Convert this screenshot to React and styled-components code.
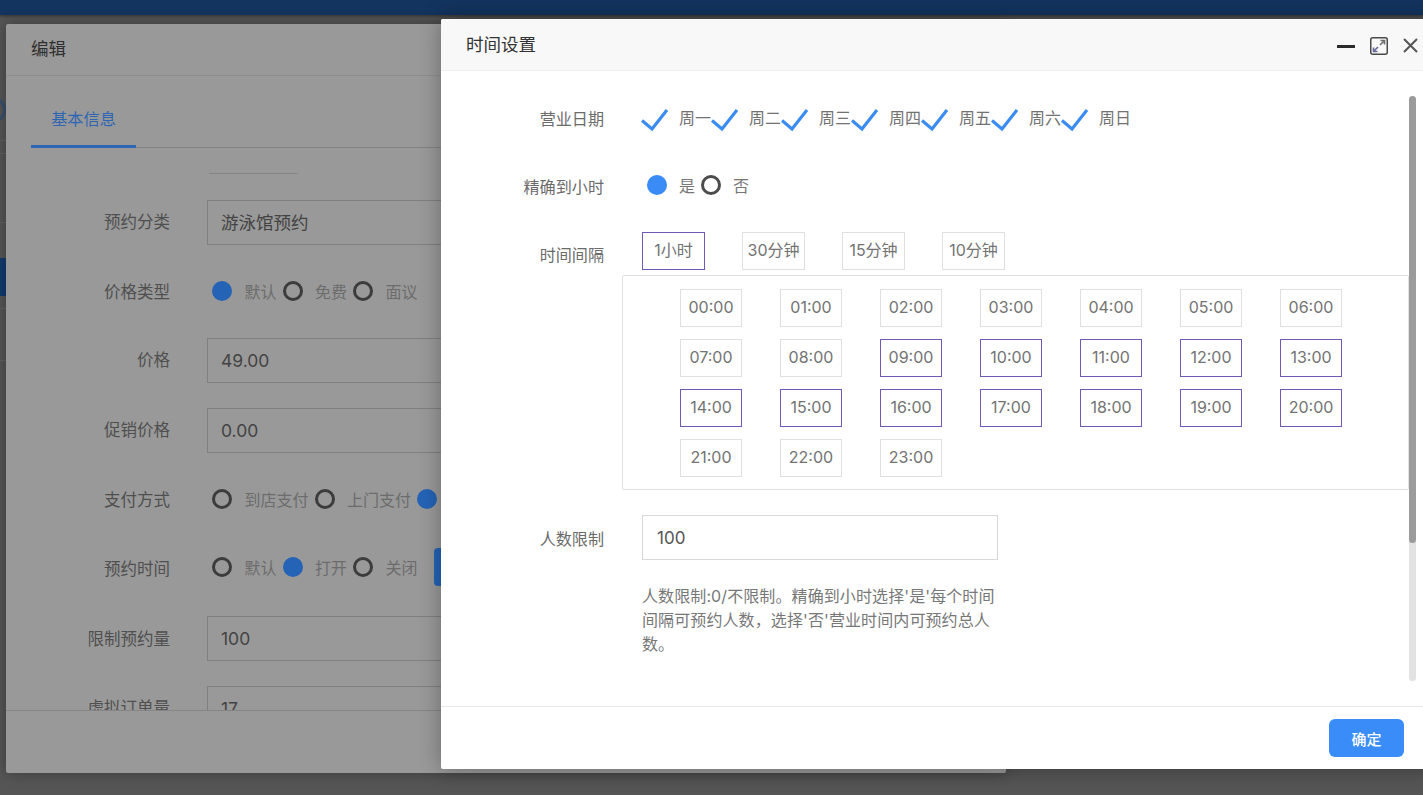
import styled, { createGlobalStyle } from 'styled-components'

const GlobalStyle = createGlobalStyle`
   html, body {
      margin: 0;
      padding: 0;
      height: 100%;
      overflow: hidden;
      background: #555;
      font-family: 'Inter', 'Noto Sans CJK SC', sans-serif;
   }
   * {
      box-sizing: border-box;
   }
`

const Page = styled.div`
   position: relative;
   width: 1423px;
   height: 795px;
   overflow: hidden;
   background: #555;
`

const TopBar = styled.div`
   height: 15px;
   background: #13345f;
   box-shadow: 0 1px 3px rgba(0, 0, 0, 0.45);
`

const SideStrip = styled.div`
   display: flex;
   flex-direction: column;
   width: 6px;
   overflow: hidden;
`

const SideRing = styled.div`
   flex: none;
   width: 26px;
   height: 26px;
   margin: 82px 0 0 -20px;
   border: 3px solid #37506e;
   border-radius: 50%;
`

const SideLine = styled.div`
   flex: none;
   height: 1px;
   margin-top: ${props => props.$gap}px;
   background: #616161;
`

const SideBlock = styled.div`
   flex: none;
   height: 38px;
   margin-top: ${props => props.$gap}px;
   background: #123a6e;
`

const Window = styled.section`
   position: absolute;
   left: ${props => props.$left}px;
   top: ${props => props.$top}px;
   display: flex;
   flex-direction: column;
   width: 1000px;
   height: ${props => props.$height}px;
   background: ${props => props.$bg};
   box-shadow: 0 0 ${props => props.$shadow}px rgba(0, 0, 0, 0.32);
   border-radius: 2px;
`

const EditHeader = styled.header`
   flex: none;
   height: 52px;
   padding-left: 25px;
   border-bottom: 1px solid #8f8f8f;
   color: #2f2f2f;
   font-size: 17.5px;
   line-height: 50px;
`

const EditBody = styled.div`
   flex: none;
   height: 635px;
   padding: 0 25px;
   overflow: hidden;
   border-bottom: 1px solid #858585;
`

const TabBar = styled.div`
   display: flex;
   height: 72px;
   border-bottom: 1px solid #828282;
`

const Tab = styled.div`
   width: 105px;
   height: 72px;
   padding-top: 28px;
   border-bottom: 3px solid #2f66b4;
   color: #2f66b4;
   font-size: 16.2px;
   line-height: 30px;
   text-align: center;
`

const ClippedField = styled.div`
   width: 89px;
   height: 26px;
   margin: 0 0 26px 178px;
   border-bottom: 1px solid #858585;
`

const EditRow = styled.div`
   display: flex;
   height: ${props => props.$height}px;
   margin-bottom: ${props => props.$gap}px;
`

const EditLabel = styled.div`
   flex: none;
   width: 139px;
   margin-right: 37px;
   color: #4f4f4f;
   font-size: 16.5px;
   line-height: ${props => props.$line || 45}px;
   text-align: right;
`

const EditInput = styled.div`
   flex: none;
   width: 700px;
   height: 45px;
   padding-left: 13px;
   border: 1px solid #808080;
   color: #434343;
   font-size: 17.5px;
   line-height: 43px;
`

const RadioGroup = styled.div`
   display: flex;
   align-items: center;
   height: 42px;
`

const RadioItem = styled.div`
   display: flex;
   align-items: center;
   flex: none;
   margin-right: 1px;
   padding-left: 5px;
   color: ${props => props.$color};
   font-size: 16px;
`

const RadioDot = styled.span`
   flex: none;
   width: 20px;
   height: 20px;
   margin-right: ${props => props.$space}px;
   border-radius: 50%;
   background: ${props => (props.$on ? props.$blue : 'transparent')};
   border: ${props => (props.$on ? 'none' : `3px solid ${props.$ring}`)};
`

const HiddenButton = styled.div`
   flex: none;
   width: 90px;
   height: 38px;
   margin-left: 15px;
   border-radius: 4px;
   background: #2463b6;
`

const TimeHeader = styled.header`
   display: flex;
   align-items: center;
   flex: none;
   height: 52px;
   padding: 0 23px 0 25px;
   border-bottom: 1px solid #eee;
   border-radius: 2px 2px 0 0;
   background: #f8f8f8;
   color: #333;
   font-size: 17.5px;
`

const TimeTitle = styled.div`
   flex: 1;
   margin-top: -2px;
`

const WindowTools = styled.div`
   display: flex;
   align-items: center;
   gap: 15px;
   margin-top: 2px;
`

const TimeBody = styled.div`
   flex: none;
   height: 636px;
   padding-top: 25px;
   border-bottom: 1px solid #e8e8e8;
   overflow: hidden;
`

const TimeRow = styled.div`
   display: flex;
   margin-bottom: ${props => props.$gap}px;
`

const TimeLabel = styled.div`
   flex: none;
   width: 163px;
   height: 46px;
   margin-right: 38px;
   color: #6b6b6b;
   font-size: 16.1px;
   line-height: ${props => props.$line || 46}px;
   text-align: right;
`

const TimeValue = styled.div`
   display: flex;
   flex-direction: column;
   flex: none;
   width: 767px;
`

const DayList = styled.div`
   display: flex;
   align-items: center;
   height: 42px;
   margin-left: -1px;
`

const DayItem = styled.div`
   display: flex;
   align-items: center;
   flex: none;
   width: 70px;
   color: #727272;
   font-size: 16px;
   white-space: nowrap;
`

const DayCheck = styled.svg`
   flex: none;
   width: 27px;
   height: 24px;
   margin: 5px 11px 0 0;
`

const IntervalList = styled.div`
   display: flex;
   gap: 37px;
   margin-bottom: 5px;
`

const Slot = styled.div`
   flex: none;
   width: ${props => props.$width}px;
   height: 38px;
   border: 1px solid ${props => (props.$on ? '#7058b8' : '#e0e0e0')};
   color: #737373;
   font-size: 16px;
   line-height: 35px;
   text-align: center;
   white-space: nowrap;
`

const SlotPanel = styled.div`
   display: grid;
   grid-template-columns: repeat(7, 62px);
   column-gap: 38px;
   row-gap: 12px;
   width: 787px;
   height: 215px;
   margin-left: -20px;
   padding: 13px 0 0 57px;
   border: 1px solid #e0e0e0;
   border-radius: 2px;
   align-content: start;
`

const TimeInput = styled.div`
   width: 356px;
   height: 45px;
   padding-left: 14px;
   border: 1px solid #d8d8d8;
   color: #555;
   font-size: 17px;
   line-height: 45px;
`

const HelpText = styled.p`
   width: 356px;
   margin: 24px 0 0;
   color: #777;
   font-size: 16px;
   letter-spacing: 0.1px;
   line-height: 24px;
`

const TimeFooter = styled.footer`
   display: flex;
   justify-content: flex-end;
   flex: none;
   padding: 12px 37px 0 0;
`

const ConfirmButton = styled.button`
   width: 75px;
   height: 38px;
   border: none;
   border-radius: 6px;
   background: #3a8df8;
   color: #fff;
   font-family: inherit;
   font-size: 15px;
   font-weight: 500;
`

const ScrollTrack = styled.div`
   position: absolute;
   left: 968px;
   top: 77px;
   width: 7px;
   height: 585px;
   border-radius: 4px;
   background: #e2e2e2;
`

const ScrollThumb = styled.div`
   width: 7px;
   height: 447px;
   border-radius: 4px;
   background: #9b9b9b;
`

const days = ['周一', '周二', '周三', '周四', '周五', '周六', '周日']
const intervals = ['1小时', '30分钟', '15分钟', '10分钟']
const activeHours = [9, 10, 11, 12, 13, 14, 15, 16, 17, 18, 19, 20]
const hours = Array.from({ length: 24 }, (_, i) => i)

const CheckMark = () => (
   <DayCheck viewBox="0 0 27 24">
      <polyline points="1,12.5 11,21 26,2" fill="none" stroke="#3a8bf2" strokeWidth="3.2" />
   </DayCheck>
)

const Radio = ({ on, label, color, space, blue, ring }) => (
   <RadioItem $color={color}>
      <RadioDot $on={on} $space={space} $blue={blue} $ring={ring} />
      {label}
   </RadioItem>
)

const EditRadio = props => <Radio color="#6c6c6c" space={12.5} blue="#2463b6" ring="#3c3c3c" {...props} />
const TimeRadio = props => <Radio color="#777" space={12} blue="#3a8bf5" ring="#4c4c4c" {...props} />

const MinimizeIcon = () => (
   <svg width="18" height="18" viewBox="0 0 18 18">
      <rect x="0" y="8" width="18" height="3" fill="#2b2b2b" />
   </svg>
)

const MaximizeIcon = () => (
   <svg width="18" height="18" viewBox="0 0 18 18" fill="none">
      <rect x="0.75" y="0.75" width="16.5" height="16.5" rx="2" stroke="#4a4a4a" strokeWidth="1.5" />
      <path d="M10 8 14.5 3.5M10.5 3.5h4V7.5" stroke="#6e6e6e" strokeWidth="1.6" />
      <path d="M8 10 3.5 14.5M3.5 10.5v4H7.5" stroke="#666a96" strokeWidth="1.6" />
   </svg>
)

const CloseIcon = () => (
   <svg width="15" height="15" viewBox="0 0 15 15">
      <path d="M1 1 14 14M14 1 1 14" stroke="#555" strokeWidth="2" />
   </svg>
)

const EditWindow = () => (
   <Window $left={6} $top={24} $height={749} $bg="#999" $shadow={14}>
      <EditHeader>编辑</EditHeader>
      <EditBody>
         <TabBar>
            <Tab>基本信息</Tab>
         </TabBar>
         <ClippedField />
         <EditRow $height={45} $gap={25}>
            <EditLabel>预约分类</EditLabel>
            <EditInput>游泳馆预约</EditInput>
         </EditRow>
         <EditRow $height={46} $gap={22}>
            <EditLabel>价格类型</EditLabel>
            <RadioGroup>
               <EditRadio on label="默认" />
               <EditRadio label="免费" />
               <EditRadio label="面议" />
            </RadioGroup>
         </EditRow>
         <EditRow $height={45} $gap={25}>
            <EditLabel>价格</EditLabel>
            <EditInput>49.00</EditInput>
         </EditRow>
         <EditRow $height={45} $gap={25}>
            <EditLabel>促销价格</EditLabel>
            <EditInput>0.00</EditInput>
         </EditRow>
         <EditRow $height={46} $gap={22}>
            <EditLabel>支付方式</EditLabel>
            <RadioGroup>
               <EditRadio label="到店支付" />
               <EditRadio label="上门支付" />
               <EditRadio on label="在线支付" />
            </RadioGroup>
         </EditRow>
         <EditRow $height={48} $gap={22}>
            <EditLabel $line={47}>预约时间</EditLabel>
            <RadioGroup>
               <EditRadio label="默认" />
               <EditRadio on label="打开" />
               <EditRadio label="关闭" />
               <HiddenButton />
            </RadioGroup>
         </EditRow>
         <EditRow $height={45} $gap={25}>
            <EditLabel $line={46}>限制预约量</EditLabel>
            <EditInput>100</EditInput>
         </EditRow>
         <EditRow $height={45} $gap={25}>
            <EditLabel>虚拟订单量</EditLabel>
            <EditInput>17</EditInput>
         </EditRow>
      </EditBody>
   </Window>
)

const TimeWindow = () => (
   <Window $left={441} $top={19} $height={750} $bg="#fff" $shadow={22}>
      <TimeHeader>
         <TimeTitle>时间设置</TimeTitle>
         <WindowTools>
            <MinimizeIcon />
            <MaximizeIcon />
            <CloseIcon />
         </WindowTools>
      </TimeHeader>
      <TimeBody>
         <TimeRow $gap={22}>
            <TimeLabel>营业日期</TimeLabel>
            <DayList>
               {days.map(day => (
                  <DayItem key={day}>
                     <CheckMark />
                     {day}
                  </DayItem>
               ))}
            </DayList>
         </TimeRow>
         <TimeRow $gap={22}>
            <TimeLabel $line={47}>精确到小时</TimeLabel>
            <RadioGroup>
               <TimeRadio on label="是" />
               <TimeRadio label="否" />
            </RadioGroup>
         </TimeRow>
         <TimeRow $gap={25}>
            <TimeLabel>时间间隔</TimeLabel>
            <TimeValue>
               <IntervalList>
                  {intervals.map((item, i) => (
                     <Slot key={item} $width={63} $on={i === 0}>
                        {item}
                     </Slot>
                  ))}
               </IntervalList>
               <SlotPanel>
                  {hours.map(hour => (
                     <Slot key={hour} $width={62} $on={activeHours.includes(hour)}>
                        {String(hour).padStart(2, '0')}:00
                     </Slot>
                  ))}
               </SlotPanel>
            </TimeValue>
         </TimeRow>
         <TimeRow $gap={0}>
            <TimeLabel $line={48}>人数限制</TimeLabel>
            <TimeValue>
               <TimeInput>100</TimeInput>
               <HelpText>人数限制:0/不限制。精确到小时选择'是'每个时间间隔可预约人数，选择'否'营业时间内可预约总人数。</HelpText>
            </TimeValue>
         </TimeRow>
      </TimeBody>
      <TimeFooter>
         <ConfirmButton>确定</ConfirmButton>
      </TimeFooter>
      <ScrollTrack>
         <ScrollThumb />
      </ScrollTrack>
   </Window>
)

export default function App() {
   return (
      <Page>
         <GlobalStyle />
         <TopBar />
         <SideStrip>
            <SideRing />
            <SideLine $gap={17} />
            <SideLine $gap={12} />
            <SideLine $gap={68} />
            <SideBlock $gap={35} />
            <SideLine $gap={12} />
            <SideLine $gap={51} />
         </SideStrip>
         <EditWindow />
         <TimeWindow />
      </Page>
   )
}
